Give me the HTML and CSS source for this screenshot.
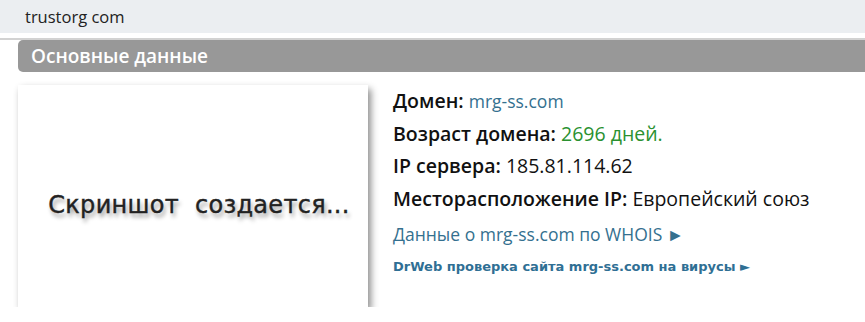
FILE: index.html
```html
<!DOCTYPE html>
<html lang="ru">
    <head>
        <meta charset="UTF-8">
        <title>trustorg com</title>
        <link rel="stylesheet" href="styles.css">
    </head>
    <body>
        <div class="topbar">trustorg com</div>
        <div class="page">
            <h2 class="block-title">Основные данные</h2>
            <div class="main">
                <div class="shot">
                    <span class="shot-text">Скриншот&nbsp; создается...</span>
                </div>
                <div class="info">
                    <p><b>Домен:</b> <a href="#" class="link">mrg-ss.com</a></p>
                    <p><b>Возраст домена:</b> <span class="age">2696 дней.</span></p>
                    <p><b>IP сервера:</b> 185.81.114.62</p>
                    <p><b>Месторасположение IP:</b> Европейский союз</p>
                    <p class="whois"><a href="#" class="link">Данные о mrg-ss.com по WHOIS ►</a></p>
                    <p class="drweb"><a href="#">DrWeb проверка сайта mrg-ss.com на вирусы ►</a></p>
                </div>
            </div>
        </div>
    </body>
</html>
```

FILE: styles.css
```css
body {
    margin: 0;
    background-color: #fff;
    font-family: "Open Sans", "Noto Sans", sans-serif;
    color: #111;
}
.topbar {
    height: 33px;
    line-height: 33px;
    background-color: #ebeef1;
    padding-left: 25px;
    font-size: 16.5px;
    color: #222;
}
.page {
    margin-top: 5px;
    border-top: 2px solid #d2d2d2;
    padding-left: 18px;
}
.block-title {
    margin: 0;
    height: 32px;
    line-height: 32px;
    background-color: #989898;
    border-radius: 5px 0 0 5px;
    padding-left: 13px;
    font-size: 19px;
    font-weight: 600;
    color: #fff;
}
.main {
    display: flex;
    padding-top: 13px;
}
.shot {
    flex: none;
    width: 350px;
    height: 222px;
    background-color: #fff;
    box-shadow: 3px 4px 7px rgba(0, 0, 0, 0.45);
    display: flex;
    align-items: center;
    justify-content: center;
}
.shot-text {
    font-family: "DejaVu Sans", sans-serif;
    font-size: 24px;
    letter-spacing: 0.3px;
    color: #222;
    text-shadow: 2px 4px 4px rgba(0, 0, 0, 0.4);
    -webkit-text-stroke: 0.4px #222;
    margin-top: 18px;
    margin-left: 12px;
}
.info {
    padding-left: 25px;
    font-size: 19.5px;
}
.info p {
    margin: 0;
    height: 32.5px;
    line-height: 32px;
    white-space: nowrap;
}
.info b {
    font-weight: 600;
}
a {
    text-decoration: none;
}
.link {
    color: #34708f;
    font-size: 17.5px;
}
.age {
    color: #2a9130;
}
.whois {
    padding-top: 3px;
}
.drweb {
    font-family: "DejaVu Sans", sans-serif;
    font-size: 13px;
    font-weight: bold;
}
.drweb a {
    color: #2f6f94;
}
```
